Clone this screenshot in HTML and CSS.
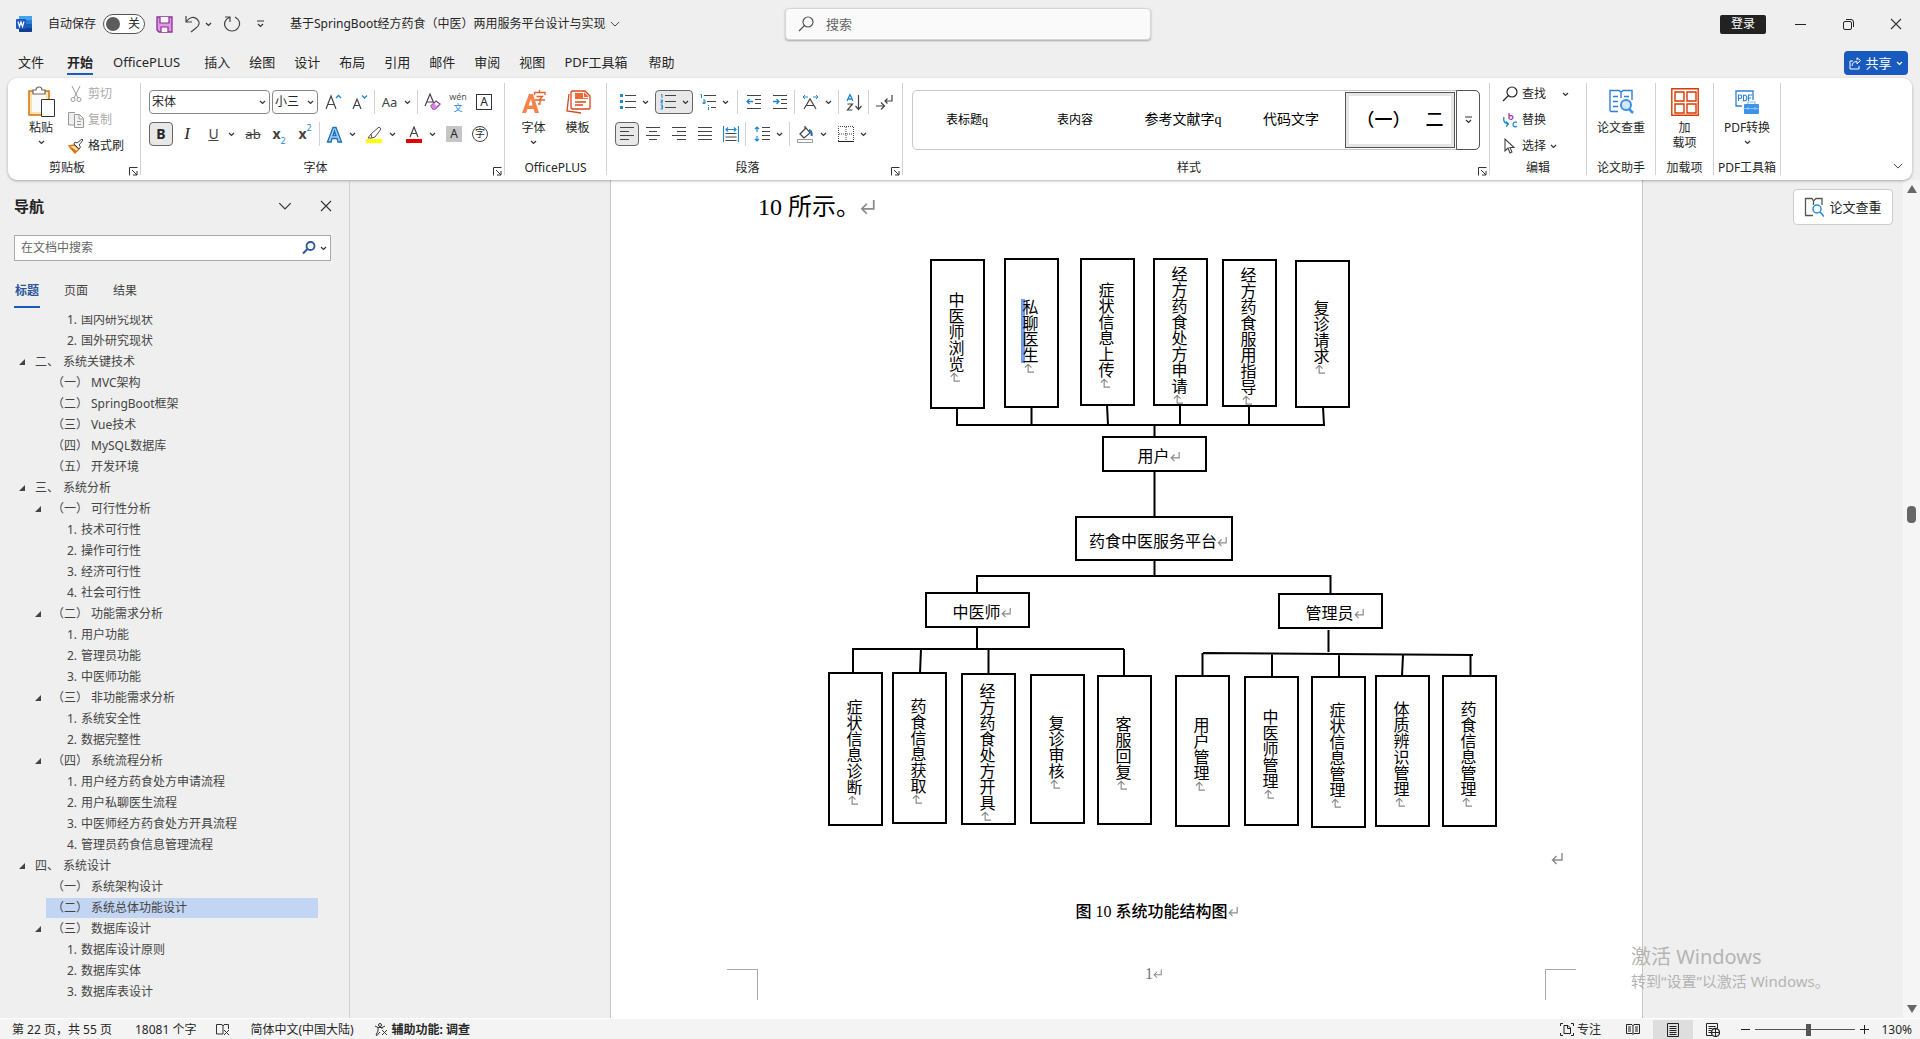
FILE: index.html
```
<!DOCTYPE html>
<html lang="zh-CN">
<head>
  <meta charset="UTF-8">
  <title>基于SpringBoot经方药食（中医）两用服务平台设计与实现</title>
  <link rel="stylesheet" href="styles.css">
</head>
<body>

  <!-- shared symbols -->
  <svg class="symbols" width="0" height="0">
    <symbol id="caret" viewBox="0 0 7 5"><path d="M1 1l2.500 2.500L6 1" fill="none" stroke="#333" stroke-width="1.200"/></symbol>
    <symbol id="chevron" viewBox="0 0 12 7"><path d="M1 1l5 5 5-5" fill="none" stroke="#333" stroke-width="1.100"/></symbol>
    <symbol id="cross" viewBox="0 0 12 12"><path d="M1 1l10 10M11 1L1 11" fill="none" stroke="#333" stroke-width="1.100"/></symbol>
    <symbol id="launcher" viewBox="0 0 9 9"><path d="M.5 8.500v-8h8M3 3l5 5M8 4v4H4" fill="none" stroke="#333"/></symbol>
    <symbol id="mark" viewBox="0 0 12 12"><path d="M11 0v7H2M5.500 3L1.500 7l4 4" fill="none" stroke="#8a8a8a" stroke-width="1.400"/></symbol>
    <symbol id="lens" viewBox="0 0 16 16"><circle cx="10" cy="6" r="5" fill="none" stroke="currentColor" stroke-width="1.200"/><path d="M6.500 9.500L1 15" stroke="currentColor" stroke-width="1.200"/></symbol>
  </svg>

  <div class="app">
    <header class="titlebar">
      <div class="quick">
        <svg class="logo" width="16" height="16" viewBox="0 0 16 16">
          <rect x="3" y="0" width="13" height="16" rx="1" fill="#2b7cd3"/>
          <rect x="3" y="0" width="13" height="4" fill="#41a5ee"/>
          <rect x="3" y="8" width="13" height="4" fill="#185abd"/>
          <path d="M3 12h13v3a1 1 0 0 1-1 1H4a1 1 0 0 1-1-1z" fill="#103f91"/>
          <rect x="0" y="3" width="10" height="10" rx="1" fill="#185abd"/>
          <path d="M2 5.500l1.500 5L5 6l1.500 4.500L8 5.500" fill="none" stroke="#fff" stroke-width="1.200"/>
        </svg>
        <label class="autosave">自动保存
          <input type="checkbox" class="switch-input">
          <span class="switch">关</span>
        </label>
        <button class="plain" aria-label="保存">
          <svg width="17" height="17" viewBox="0 0 17 17"><path d="M1 1h15v15H3l-2-2z" fill="#dd9ae0" stroke="#8a2f96" stroke-width="1.300"/><path d="M4 1v6h9V1M5 16v-5h7v5" fill="#f5f5f5" stroke="#8a2f96" stroke-width="1.200"/></svg>
        </button>
        <button class="plain undo" aria-label="撤消">
          <svg width="17" height="18" viewBox="0 0 17 18"><path d="M2 1v6h6M2 7c3-5 8-6 11-3s3 6-1 9l-5 4" fill="none" stroke="#444" stroke-width="1.200"/></svg>
          <svg width="7" height="5"><use href="#caret"/></svg>
        </button>
        <button class="plain redo" aria-label="重复">
          <svg width="18" height="18" viewBox="0 0 18 18"><path d="M2 2h5v5M6.500 2.500C2 4 0 9 3 13s9 4 12 0 2-8-3-11" fill="none" stroke="#444" stroke-width="1.200"/></svg>
        </button>
        <button class="plain more" aria-label="自定义">
          <svg width="9" height="8" viewBox="0 0 9 8"><path d="M1 1h7M2 4l2.500 2.500L7 4" fill="none" stroke="#333" stroke-width="1.200"/></svg>
        </button>
        <button class="plain doc-name">基于SpringBoot经方药食（中医）两用服务平台设计与实现
          <svg width="10" height="6"><use href="#chevron"/></svg>
        </button>
      </div>
      <label class="search">
        <svg width="16" height="16"><use href="#lens"/></svg>
        <input type="text" placeholder="搜索" aria-label="搜索">
      </label>
      <div class="window">
        <button class="login">登录</button>
        <button class="win-btn" aria-label="最小化"><svg width="11" height="11"><path d="M0 5.500h11" stroke="#222"/></svg></button>
        <button class="win-btn" aria-label="还原"><svg width="11" height="11" viewBox="0 0 11 11"><rect x=".5" y="2.500" width="8" height="8" rx="1.500" fill="none" stroke="#222"/><path d="M3 .5h5a2.500 2.500 0 0 1 2.500 2.500v5" fill="none" stroke="#222"/></svg></button>
        <button class="win-btn" aria-label="关闭"><svg width="12" height="12"><use href="#cross"/></svg></button>
      </div>
    </header>

    <nav class="tabs">
      <a href="#" class="tab">文件</a>
      <a href="#" class="tab active">开始</a>
      <a href="#" class="tab brand">OfficePLUS</a>
      <a href="#" class="tab">插入</a>
      <a href="#" class="tab">绘图</a>
      <a href="#" class="tab">设计</a>
      <a href="#" class="tab">布局</a>
      <a href="#" class="tab">引用</a>
      <a href="#" class="tab">邮件</a>
      <a href="#" class="tab">审阅</a>
      <a href="#" class="tab">视图</a>
      <a href="#" class="tab">PDF工具箱</a>
      <a href="#" class="tab">帮助</a>
      <button class="share">
        <svg width="12" height="13" viewBox="0 0 12 13"><path d="M4 4H1v8h9V9M3 9c0-3 2-4.500 5-4.500V7l3.500-3.500L8 .8v2.400" fill="none" stroke="#fff"/></svg>
        共享
        <svg width="7" height="5" viewBox="0 0 7 5"><path d="M1 1l2.500 2.500L6 1" fill="none" stroke="#fff" stroke-width="1.200"/></svg>
      </button>
    </nav>

    <section class="ribbon">
      <div class="group clipboard">
        <div class="group-body">
          <button class="big">
            <svg width="28" height="32" viewBox="0 0 28 32"><path d="M2 5h20v24H2z" fill="#fde3a7" stroke="#d9720f" stroke-width="1.500"/><path d="M5 8h14v18H5z" fill="#fafafa"/><path d="M6 8V4h3c0-4 6-4 6 0h3v4z" fill="#fff" stroke="#666" stroke-width="1.200"/><path d="M14.500 13.500h13v17h-13z" fill="#fff" stroke="#333"/></svg>
            <span>粘贴</span>
            <svg width="7" height="5"><use href="#caret"/></svg>
          </button>
          <div class="list">
            <button class="line-btn" disabled>
              <svg width="16" height="16" viewBox="0 0 16 16"><path d="M4 0l6 12M12 0L6 12" fill="none" stroke="#999"/><circle cx="5" cy="13.500" r="2" fill="none" stroke="#999"/><circle cx="11" cy="13.500" r="2" fill="none" stroke="#999"/></svg>剪切
            </button>
            <button class="line-btn" disabled>
              <svg width="16" height="16" viewBox="0 0 16 16"><path d="M7 13H.5V.5H7" fill="#eee" stroke="#999"/><path d="M6.500 2.500h5l4 4v9h-9zM11 3v4h4M9 9.500h4M9 12.500h4" fill="#f3f3f3" stroke="#999"/></svg>复制
            </button>
            <button class="line-btn">
              <svg width="16" height="16" viewBox="0 0 16 16"><path d="M1 8l5-1 5 4-4 4z" fill="#fde3a7" stroke="#d9720f" stroke-width="1.300"/><path d="M3 10l5 4" stroke="#d9720f" stroke-width="2"/><path d="M6 6l5 5 1.500-2L11 7l4-5-1-1-5 4-2-1z" fill="#fff" stroke="#444"/></svg>格式刷
            </button>
          </div>
        </div>
        <div class="group-foot launch"><span>剪贴板</span><button class="plain" aria-label="剪贴板选项"><svg width="9" height="9"><use href="#launcher"/></svg></button></div>
      </div>

      <div class="group font">
        <div class="group-rows">
          <div class="row">
            <select class="combo family" aria-label="字体"><option>宋体</option></select>
            <select class="combo size" aria-label="字号"><option>小三</option></select>
            <button class="tool" aria-label="增大字号"><svg width="18" height="16" viewBox="0 0 18 16"><path d="M1 15L6 2l5 13M3 10.500h6" fill="none" stroke="#444" stroke-width="1.200"/><path d="M11 4l2.500-2.500L16 4" fill="none" stroke="#1e88d0" stroke-width="1.300"/></svg></button>
            <button class="tool" aria-label="减小字号"><svg width="18" height="16" viewBox="0 0 18 16"><path d="M2 15l4-10 4 10M3.500 11.500h5" fill="none" stroke="#444" stroke-width="1.200"/><path d="M11 1.500L13.500 4 16 1.500" fill="none" stroke="#1e88d0" stroke-width="1.300"/></svg></button>
            <i class="sep"></i>
            <button class="tool split"><span class="glyph">Aa</span><svg width="7" height="5"><use href="#caret"/></svg></button>
            <i class="sep"></i>
            <button class="tool" aria-label="清除格式"><svg width="18" height="18" viewBox="0 0 18 18"><path d="M2 13L7 1l5 12M4 9h6" fill="none" stroke="#444" stroke-width="1.200"/><path d="M8 13l5-5 4 3-5 5h-2z" fill="#fff" stroke="#9b34a8" stroke-width="1.300"/><path d="M8 13l3-3 3 4-2 2h-2z" fill="#d08bd8"/></svg></button>
            <button class="tool pinyin"><span>wén</span><b>文</b></button>
            <button class="tool"><span class="boxed">A</span></button>
          </div>
          <div class="row">
            <button class="tool on"><b class="bold">B</b></button>
            <button class="tool"><i class="italic">I</i></button>
            <button class="tool split"><u class="glyph line">U</u><svg width="7" height="5"><use href="#caret"/></svg></button>
            <button class="tool"><s class="strike">ab</s></button>
            <button class="tool script"><b>x</b><sub>2</sub></button>
            <button class="tool script"><b>x</b><sup>2</sup></button>
            <i class="sep"></i>
            <button class="tool split"><svg width="17" height="17" viewBox="0 0 17 17"><path d="M1.500 16L7 1.500h3L15.500 16H12l-1-3.500H6L5 16zM7 9.500h3L8.500 5z" fill="#9fd0f3" stroke="#1f6fb8" stroke-width="1.300"/></svg><svg width="7" height="5"><use href="#caret"/></svg></button>
            <button class="tool split"><svg width="17" height="17" viewBox="0 0 17 17"><path d="M5 8l8-7 2 2-6 8-3 1zM5 8l-3 4h4" fill="#fff" stroke="#555"/><path d="M0 13h16v4H0z" fill="#ff0"/></svg><svg width="7" height="5"><use href="#caret"/></svg></button>
            <button class="tool split"><svg width="17" height="17" viewBox="0 0 17 17"><path d="M4 11L8 1l4 10M5.500 7.500h5" fill="none" stroke="#444" stroke-width="1.200"/><path d="M0 13h16v4H0z" fill="#e60000"/></svg><svg width="7" height="5"><use href="#caret"/></svg></button>
            <button class="tool"><span class="shaded">A</span></button>
            <button class="tool"><span class="ring">字</span></button>
          </div>
        </div>
        <div class="group-foot launch"><span>字体</span><button class="plain" aria-label="字体选项"><svg width="9" height="9"><use href="#launcher"/></svg></button></div>
      </div>

      <div class="group office">
        <div class="group-body">
          <button class="big">
            <svg width="26" height="26" viewBox="0 0 26 26"><path d="M1 24L8 5h4l6 19h-4l-1.500-4H6.500L5 24zM7.500 16.500h4L10 10z" fill="#f5824a"/><path d="M13.500 6V3.500H24V6M18.500 1v2M15.500 7.500h6L19 10v5h-2M14 11h10" fill="none" stroke="#e4602a" stroke-width="1.300"/></svg>
            <span>字体</span>
            <svg width="7" height="5"><use href="#caret"/></svg>
          </button>
          <button class="big">
            <svg width="26" height="26" viewBox="0 0 26 26"><path d="M7 2h13l5 5v12a1 1 0 0 1-1 1H8a2 2 0 0 1-2-2V3zM4 5L2 22l14 2" fill="none" stroke="#d9481c" stroke-width="1.300"/><path d="M10 4h8v5h5v1H10zM19 3v5h5z" fill="#ee6a35"/><path d="M10 13h11M10 16h8" stroke="#d9481c" stroke-width="1.300"/></svg>
            <span>模板</span>
          </button>
        </div>
        <div class="group-foot"><span>OfficePLUS</span></div>
      </div>

      <div class="group paragraph">
        <div class="group-rows">
          <div class="row">
            <button class="tool split" aria-label="项目符号"><svg width="16" height="16" viewBox="0 0 16 16"><path d="M0 0h3v3H0zM0 6h3v3H0zM0 12h3v3H0z" fill="#1e88d0"/><path d="M5 1.500h11M5 7.500h11M5 13.500h11" stroke="#444"/></svg><svg width="7" height="5"><use href="#caret"/></svg></button>
            <button class="tool split on" aria-label="编号"><svg width="16" height="16" viewBox="0 0 16 16"><path d="M1 .5h1V4M.5 6h2v1.500H1V9h2M.5 11h2v4h-2M1 13h1.500" fill="none" stroke="#1e88d0"/><path d="M5 1.500h11M5 7.500h11M5 13.500h11" stroke="#444"/></svg><svg width="7" height="5"><use href="#caret"/></svg></button>
            <button class="tool split" aria-label="多级列表"><svg width="16" height="16" viewBox="0 0 16 16"><path d="M.5.500h1V4M3 6h2v3.500H3V8h2M8.500 11v1M8.500 13v3" fill="none" stroke="#1e88d0"/><path d="M4 1.500h12M7 7.500h9M11 13.500h5" stroke="#444"/></svg><svg width="7" height="5"><use href="#caret"/></svg></button>
            <i class="sep wide"></i>
            <button class="tool" aria-label="减少缩进"><svg width="16" height="16" viewBox="0 0 16 16"><path d="M1 1.500h14M9 5.500h6M9 9.500h6M1 14.500h14" stroke="#444"/><path d="M7 7.500H1M3.500 5L1 7.500 3.500 10" fill="none" stroke="#1e88d0" stroke-width="1.300"/></svg></button>
            <button class="tool" aria-label="增加缩进"><svg width="16" height="16" viewBox="0 0 16 16"><path d="M1 1.500h14M9 5.500h6M9 9.500h6M1 14.500h14" stroke="#444"/><path d="M1 7.500h6M4.500 5L7 7.500 4.500 10" fill="none" stroke="#1e88d0" stroke-width="1.300"/></svg></button>
            <i class="sep"></i>
            <button class="tool split" aria-label="中文版式"><svg width="17" height="16" viewBox="0 0 17 16"><path d="M2 15L8 5l6 10M4 11.500h8" fill="none" stroke="#444" stroke-width="1.200"/><path d="M6 3H1M3 1L1 3l2 2M11 3h5M14 1l2 2-2 2" fill="none" stroke="#1e88d0"/></svg><svg width="7" height="5"><use href="#caret"/></svg></button>
            <i class="sep"></i>
            <button class="tool" aria-label="排序"><svg width="17" height="17" viewBox="0 0 17 17"><path d="M1 7l3-6.500L7 7M2 5h4" fill="none" stroke="#1e88d0" stroke-width="1.300"/><path d="M1.500 10h5l-5 6h5M12.500 1v14M9.500 12l3 3.500 3-3.500" fill="none" stroke="#444" stroke-width="1.200"/></svg></button>
            <i class="sep"></i>
            <button class="tool" aria-label="显示编辑标记"><svg width="17" height="17" viewBox="0 0 17 17"><path d="M16 1v6H9M11.500 4.500L9 7l2.500 2.500M0 12h8M5 8.500L8.500 12 5 15.500" fill="none" stroke="#444" stroke-width="1.200"/></svg></button>
          </div>
          <div class="row">
            <button class="tool on" aria-label="左对齐"><svg width="16" height="16"><path d="M1 1.500h14M1 5.500h9M1 9.500h14M1 13.500h9" stroke="#444"/></svg></button>
            <button class="tool" aria-label="居中"><svg width="16" height="16"><path d="M1 1.500h14M4 5.500h8M1 9.500h14M4 13.500h8" stroke="#444"/></svg></button>
            <button class="tool" aria-label="右对齐"><svg width="16" height="16"><path d="M1 1.500h14M6 5.500h9M1 9.500h14M6 13.500h9" stroke="#444"/></svg></button>
            <button class="tool" aria-label="两端对齐"><svg width="16" height="16"><path d="M1 1.500h14M1 5.500h14M1 9.500h14M1 13.500h14" stroke="#444"/></svg></button>
            <button class="tool" aria-label="分散对齐"><svg width="16" height="16" viewBox="0 0 16 16"><path d="M.5 0v16M15.500 0v16M3 3.500h10M5 1.500l-2 2 2 2M11 1.500l2 2-2 2" fill="none" stroke="#1e88d0" stroke-width="1.200"/><path d="M2.500 7.500h11M2.500 11h11M2.500 14.500h11" stroke="#444"/></svg></button>
            <i class="sep"></i>
            <button class="tool split" aria-label="行距"><svg width="16" height="16" viewBox="0 0 16 16"><path d="M3 1v5M3 10v5M1 3l2-2 2 2M1 13l2 2 2-2" fill="none" stroke="#1e88d0" stroke-width="1.200"/><path d="M8 1.500h8M8 5.500h8M8 9.500h8M8 13.500h8" stroke="#444"/></svg><svg width="7" height="5"><use href="#caret"/></svg></button>
            <i class="sep"></i>
            <button class="tool split" aria-label="底纹"><svg width="17" height="17" viewBox="0 0 17 17"><path d="M3 8l6-6 4 5-6 5zM8 3V0" fill="#fff" stroke="#444" stroke-width="1.200"/><path d="M12 4c3 1 3 3 2.500 6" fill="none" stroke="#1f6fb8" stroke-width="2"/><path d="M.5 13.500h15v3H.5z" fill="#fff" stroke="#999"/></svg><svg width="7" height="5"><use href="#caret"/></svg></button>
            <button class="tool split" aria-label="边框"><svg width="16" height="16" viewBox="0 0 16 16"><path d="M.5 15V.5h15V15M8 1v14M1 8h14" fill="none" stroke="#444" stroke-dasharray="1 1"/><path d="M0 15.500h16" stroke="#222"/></svg><svg width="7" height="5"><use href="#caret"/></svg></button>
          </div>
        </div>
        <div class="group-foot launch"><span>段落</span><button class="plain" aria-label="段落选项"><svg width="9" height="9"><use href="#launcher"/></svg></button></div>
      </div>

      <div class="group styles">
        <div class="group-rows">
          <div class="gallery">
            <button class="style small">表标题q</button>
            <button class="style small">表内容</button>
            <button class="style">参考文献字q</button>
            <button class="style">代码文字</button>
            <button class="style selected"><span>（一）</span><span>二</span></button>
            <button class="expand" aria-label="其他样式"><svg width="9" height="8" viewBox="0 0 9 8"><path d="M1 1h7M2 4l2.500 2.500L7 4" fill="none" stroke="#333" stroke-width="1.200"/></svg></button>
          </div>
        </div>
        <div class="group-foot launch"><span>样式</span><button class="plain" aria-label="样式选项"><svg width="9" height="9"><use href="#launcher"/></svg></button></div>
      </div>

      <div class="group edit">
        <div class="group-body">
          <div class="list">
            <button class="line-btn find"><svg width="16" height="16"><use href="#lens"/></svg>查找<svg width="7" height="5"><use href="#caret"/></svg></button>
            <button class="line-btn"><svg width="16" height="16" viewBox="0 0 16 16"><path d="M7 1v6M7 4.500c1-1.500 4-1 4 1s-3 2.500-4 1" fill="none" stroke="#9b34a8" stroke-width="1.200"/><path d="M2 5c-1 4 0 6 4 7M4 9.500L6.500 12 4 14.500M15 10.500c-2-1.500-4 0-4 2s2 3 4 1.500" fill="none" stroke="#1e88d0" stroke-width="1.300"/></svg>替换</button>
            <button class="line-btn"><svg width="16" height="16" viewBox="0 0 16 16"><path d="M3 1v12l3-3 2 5 2-1-2-4.500h4z" fill="#fff" stroke="#444" stroke-width="1.100"/></svg>选择<svg width="7" height="5"><use href="#caret"/></svg></button>
          </div>
        </div>
        <div class="group-foot"><span>编辑</span></div>
      </div>

      <div class="group paper-tool">
        <div class="group-body">
          <button class="big">
            <svg width="26" height="26" viewBox="0 0 26 26"><path d="M24 11V1.500h-9L13 3l-2-1.500H2v20l1 1h7M13 3v6M5 7.500h5M5 12.500h5M5 17.500h5M16 7.500h5" fill="none" stroke="#2f7fd6" stroke-width="1.400"/><circle cx="18" cy="16" r="5" fill="#d4e8fb" stroke="#3a8fe6" stroke-width="2"/><path d="M21 20l4 4" stroke="#3a8fe6" stroke-width="2.500"/></svg>
            <span>论文查重</span>
          </button>
        </div>
        <div class="group-foot"><span>论文助手</span></div>
      </div>

      <div class="group addins">
        <div class="group-body">
          <button class="big">
            <svg width="28" height="28" viewBox="0 0 28 28"><path d="M.8.800h26.400v26.400H.8zM4 4h9v9H4zM16 4h9v9h-9zM4 16h9v9H4zM16 16h9v9h-9z" fill="none" stroke="#d83b01" stroke-width="1.400"/></svg>
            <span>加<br>载项</span>
          </button>
        </div>
        <div class="group-foot"><span>加载项</span></div>
      </div>

      <div class="group pdf">
        <div class="group-body">
          <button class="big">
            <svg width="26" height="26" viewBox="0 0 26 26"><path d="M8 17H2V2h17v9" fill="none" stroke="#2f7fd6" stroke-width="1.300"/><path d="M4.500 12V6h1.500a1.500 1.500 0 0 1 0 3.500H4.500M9.500 6v6c4.500 0 4.500-6 0-6M14.500 12V6H18M14.500 9H17" fill="none" stroke="#2f7fd6" stroke-width="1.100"/><rect x="10" y="15" width="15" height="10" rx="1" fill="#3f92ea"/><path d="M14 15v-2h7v2M10 19.500h15M14 18v3M21 18v3" fill="none" stroke="#8cc3f8" stroke-width="1.200"/></svg>
            <span>PDF转换</span>
            <svg width="7" height="5"><use href="#caret"/></svg>
          </button>
        </div>
        <div class="group-foot"><span>PDF工具箱</span></div>
      </div>

      <button class="plain collapse" aria-label="折叠功能区"><svg width="10" height="6"><use href="#chevron"/></svg></button>
    </section>

    <main class="workspace">
      <aside class="outline">
        <div class="outline-head">
          <h2>导航</h2>
          <button class="plain" aria-label="选项"><svg width="14" height="8"><use href="#chevron"/></svg></button>
          <button class="plain" aria-label="关闭"><svg width="12" height="12"><use href="#cross"/></svg></button>
        </div>
        <label class="outline-search">
          <input type="text" placeholder="在文档中搜索" aria-label="在文档中搜索">
          <svg width="14" height="14" viewBox="0 0 14 14"><circle cx="8.500" cy="5" r="4" fill="none" stroke="#2b579a" stroke-width="1.800"/><path d="M5.500 8L1 12.500" stroke="#2b579a" stroke-width="2"/></svg>
          <svg width="7" height="5"><use href="#caret"/></svg>
        </label>
        <div class="outline-tabs">
          <button class="active">标题</button>
          <button>页面</button>
          <button>结果</button>
        </div>
        <div class="outline-scroll">
          <ul class="tree">
            <li class="l3"><span>1.</span>国内研究现状</li>
            <li class="l3"><span>2.</span>国外研究现状</li>
            <li class="l1 open"><span>二、</span>系统关键技术</li>
            <li class="l2"><span>（一）</span>MVC架构</li>
            <li class="l2"><span>（二）</span>SpringBoot框架</li>
            <li class="l2"><span>（三）</span>Vue技术</li>
            <li class="l2"><span>（四）</span>MySQL数据库</li>
            <li class="l2"><span>（五）</span>开发环境</li>
            <li class="l1 open"><span>三、</span>系统分析</li>
            <li class="l2 open"><span>（一）</span>可行性分析</li>
            <li class="l3"><span>1.</span>技术可行性</li>
            <li class="l3"><span>2.</span>操作可行性</li>
            <li class="l3"><span>3.</span>经济可行性</li>
            <li class="l3"><span>4.</span>社会可行性</li>
            <li class="l2 open"><span>（二）</span>功能需求分析</li>
            <li class="l3"><span>1.</span>用户功能</li>
            <li class="l3"><span>2.</span>管理员功能</li>
            <li class="l3"><span>3.</span>中医师功能</li>
            <li class="l2 open"><span>（三）</span>非功能需求分析</li>
            <li class="l3"><span>1.</span>系统安全性</li>
            <li class="l3"><span>2.</span>数据完整性</li>
            <li class="l2 open"><span>（四）</span>系统流程分析</li>
            <li class="l3"><span>1.</span>用户经方药食处方申请流程</li>
            <li class="l3"><span>2.</span>用户私聊医生流程</li>
            <li class="l3"><span>3.</span>中医师经方药食处方开具流程</li>
            <li class="l3"><span>4.</span>管理员药食信息管理流程</li>
            <li class="l1 open"><span>四、</span>系统设计</li>
            <li class="l2"><span>（一）</span>系统架构设计</li>
            <li class="l2 current"><span>（二）</span>系统总体功能设计</li>
            <li class="l2 open"><span>（三）</span>数据库设计</li>
            <li class="l3"><span>1.</span>数据库设计原则</li>
            <li class="l3"><span>2.</span>数据库实体</li>
            <li class="l3"><span>3.</span>数据库表设计</li>
          </ul>
        </div>
      </aside>

      <div class="canvas">
        <article class="page">
          <p class="lead">10 所示。<svg width="15" height="15"><use href="#mark"/></svg></p>

          <div class="figure">
            <div class="diagram">
              <svg class="wires" viewBox="758 240 793 625">
                <path d="M957 407v18M1031.500 407v18M1107 405l1 20M1180 405v20M1249 406v19M1323 407l1 18M956 425h369M1154.500 425v12M1154.500 471v46M1154.500 560v16M976 576h355.500M977 576v17M1330.500 576v18M977 627v22M852 649h272M853 649v24M921 649l-1 24M988.500 649v25M1124 649v27M1328.500 630v22M1203 653l270 2M1202.500 653v23M1272 654v23M1339 654v23M1403 655l-1 21M1470.500 655v21"/>
              </svg>
              <div class="node tall browse"><span>中医师浏览</span><svg><use href="#mark"/></svg></div>
              <div class="node tall chat"><span class="picked">私聊医生</span><svg><use href="#mark"/></svg></div>
              <div class="node tall upload"><span>症状信息上传</span><svg><use href="#mark"/></svg></div>
              <div class="node tall apply"><span>经方药食处方申请</span><svg><use href="#mark"/></svg></div>
              <div class="node tall guide"><span>经方药食服用指导</span><svg><use href="#mark"/></svg></div>
              <div class="node tall revisit"><span>复诊请求</span><svg><use href="#mark"/></svg></div>

              <div class="node user"><span>用户</span><svg><use href="#mark"/></svg></div>
              <div class="node platform"><span>药食中医服务平台</span><svg><use href="#mark"/></svg></div>
              <div class="node doctor"><span>中医师</span><svg><use href="#mark"/></svg></div>
              <div class="node admin"><span>管理员</span><svg><use href="#mark"/></svg></div>

              <div class="node tall diagnose"><span>症状信息诊断</span><svg><use href="#mark"/></svg></div>
              <div class="node tall fetch"><span>药食信息获取</span><svg><use href="#mark"/></svg></div>
              <div class="node tall prescribe"><span>经方药食处方开具</span><svg><use href="#mark"/></svg></div>
              <div class="node tall review"><span>复诊审核</span><svg><use href="#mark"/></svg></div>
              <div class="node tall reply"><span>客服回复</span><svg><use href="#mark"/></svg></div>

              <div class="node tall manage-user"><span>用户管理</span><svg><use href="#mark"/></svg></div>
              <div class="node tall manage-doctor"><span>中医师管理</span><svg><use href="#mark"/></svg></div>
              <div class="node tall manage-symptom"><span>症状信息管理</span><svg><use href="#mark"/></svg></div>
              <div class="node tall manage-body"><span>体质辨识管理</span><svg><use href="#mark"/></svg></div>
              <div class="node tall manage-food"><span>药食信息管理</span><svg><use href="#mark"/></svg></div>
            </div>
            <svg class="figure-mark" width="12" height="12"><use href="#mark"/></svg>
          </div>

          <p class="caption">图 10 系统功能结构图<svg width="10" height="10"><use href="#mark"/></svg></p>

          <div class="page-foot">
            <i class="corner left"></i>
            <span class="page-no">1<svg width="9" height="10"><use href="#mark"/></svg></span>
            <i class="corner right"></i>
          </div>
        </article>

        <button class="check">
          <svg width="20" height="20" viewBox="0 0 20 20"><path d="M18 8V1.500h-6L9.500 4 8 1.500H1.500v17H9M9.500 3v5" fill="none" stroke="#555" stroke-width="1.300"/><circle cx="13" cy="12" r="4" fill="none" stroke="#2a8fd8" stroke-width="1.500"/><path d="M16 15l4 4.500" stroke="#2a8fd8" stroke-width="1.600"/></svg>
          论文查重
        </button>
        <div class="watermark">
          <p class="wm-title">激活 Windows</p>
          <p>转到“设置”以激活 Windows。</p>
        </div>
      </div>

      <div class="scrollbar">
        <svg width="10" height="8"><path d="M5 0l5 8H0z" fill="#666"/></svg>
        <i class="thumb"></i>
        <svg width="10" height="8"><path d="M5 8l5-8H0z" fill="#666"/></svg>
      </div>
    </main>

    <footer class="status">
      <span class="pages">第 22 页，共 55 页</span>
      <span>18081 个字</span>
      <svg width="14" height="13" viewBox="0 0 14 13"><path d="M7 11H.5V1.500H6L7 3l1-1.500h4.500V6M7 3v8M8 7l5 5M13 7l-5 5" fill="none" stroke="#333"/></svg>
      <span>简体中文(中国大陆)</span>
      <span class="access">
        <svg width="14" height="13" viewBox="0 0 14 13"><circle cx="6" cy="2" r="1.500" fill="none" stroke="#333"/><path d="M1 3l3 1.500h4L11 3M4 4.500V8l-2 4 1 .5L6 9M8 4.500V6M8 7l5 5M13 7l-5 5" fill="none" stroke="#333"/></svg>
        辅助功能: 调查
      </span>
      <div class="views">
        <button class="plain focus"><svg width="14" height="13" viewBox="0 0 14 13"><path d="M3 .5H.5V3M11 .5h2.500V3M3 12.500H.5V10M11 12.500h2.500V10M4 2.500h4l2.500 2.500v5.500H4zM7.500 3v2.500H10" fill="none" stroke="#222"/></svg>专注</button>
        <button class="view" aria-label="阅读视图"><svg width="14" height="13" viewBox="0 0 14 13"><path d="M.5 1.500H6l1 1 1-1h5.500v9H8l-1 1-1-1H.5zM7 2v9M2 4h3M2 6h3M2 8h3M9 4h3M9 6h3M9 8h3" fill="none" stroke="#222"/></svg></button>
        <button class="view on" aria-label="页面视图"><svg width="12" height="14" viewBox="0 0 12 14"><path d="M.5.500h11v13H.5zM2.500 3.500h7M2.500 5.500h7M2.500 7.500h7M2.500 9.500h7M2.500 11.500h7" fill="none" stroke="#222"/></svg></button>
        <button class="view" aria-label="Web 版式"><svg width="14" height="14" viewBox="0 0 14 14"><path d="M6 12.500H.5V.5h11V5M2.500 3.500h7M2.500 5.500h4M2.500 7.500h3M2.500 9.500h3" fill="none" stroke="#222"/><circle cx="9.500" cy="9.500" r="4" fill="#f4f4f4" stroke="#222" stroke-width="1.300"/><path d="M5.500 9.500h8M9.500 5.500v8" stroke="#222"/></svg></button>
      </div>
      <div class="zoom">
        <button class="plain" aria-label="缩小"><svg width="9" height="9"><path d="M0 4.500h9" stroke="#222"/></svg></button>
        <input type="range" min="0" max="100" value="54" aria-label="缩放">
        <button class="plain" aria-label="放大"><svg width="9" height="9"><path d="M0 4.500h9M4.500 0v9" stroke="#222"/></svg></button>
        <span class="percent">130%</span>
      </div>
    </footer>
  </div>

</body>
</html>
```
FILE: styles.css
```
* {
  box-sizing: border-box;
}

body {
  margin: 0;
  height: 100vh;
  overflow: hidden;
  background: #efefef;
  color: #262626;
  font-family: "Noto Sans", "Noto Sans CJK SC", sans-serif;
  font-size: 12px;
  line-height: 16px;
}

p, h2, ul {
  margin: 0;
  padding: 0;
}

button, input, select {
  font: inherit;
  color: inherit;
}

button {
  border: none;
  background: none;
  padding: 0;
  white-space: nowrap;
}

svg {
  flex: none;
  display: block;
}

.symbols {
  position: absolute;
}

.plain {
  display: flex;
  align-items: center;
}

.app {
  height: 100vh;
  display: grid;
  grid-template-rows: 48px 30px auto 1fr 21px;
}

/* title bar */
.titlebar {
  display: grid;
  grid-template-columns: 1fr 366px 1fr;
  align-items: center;
  padding-left: 16px;
}

.quick {
  display: flex;
  align-items: center;
  gap: 11px;
}

.autosave {
  display: flex;
  align-items: center;
  gap: 7px;
  margin-left: 5px;
}

.switch-input {
  position: absolute;
  opacity: 0;
}

.switch {
  display: flex;
  align-items: center;
  justify-content: flex-end;
  gap: 8px;
  flex-direction: row-reverse;
  width: 42px;
  height: 20px;
  padding: 0 2px;
  border: 1px solid #555;
  border-radius: 10px;
  background: #fff;
}

.switch::after {
  content: "";
  width: 14px;
  height: 14px;
  border-radius: 50%;
  background: #5c5c5c;
}

.undo {
  gap: 4px;
}

.redo {
  margin-right: 4px;
}

.more {
  margin-right: 14px;
}

.doc-name {
  gap: 4px;
}

.search {
  display: flex;
  align-items: center;
  gap: 12px;
  height: 32px;
  padding: 0 12px;
  border: 1px solid #d6d6d6;
  border-radius: 4px;
  background: #fafafa;
  box-shadow: 0 1px 2px rgba(0, 0, 0, 0.3);
  color: #555;
}

.search input {
  flex: 1;
  border: none;
  background: none;
  padding: 0;
  font-size: 13px;
}

input::placeholder {
  color: #666;
  opacity: 1;
}

.window {
  display: flex;
  justify-content: flex-end;
  align-items: center;
}

.login {
  width: 46px;
  height: 19px;
  margin-right: 10px;
  border-radius: 2px;
  background: #222;
  color: #fff;
}

.win-btn {
  width: 48px;
  height: 48px;
  display: flex;
  align-items: center;
  justify-content: center;
}

/* ribbon tabs */
.tabs {
  display: flex;
  align-items: center;
  gap: 19px;
  padding: 0 12px 0 18px;
  font-size: 13px;
}

.tab {
  height: 24px;
  padding-top: 3px;
  color: #262626;
  text-decoration: none;
  border-bottom: 2px solid transparent;
  white-space: nowrap;
}

.tab.active {
  margin-left: 4px;
  font-weight: bold;
  border-color: #185abd;
}

.tab.brand {
  margin: 0 5px 0 1px;
}

.tab:last-of-type {
  margin-left: 2px;
}

.share {
  display: flex;
  align-items: center;
  justify-content: center;
  gap: 4px;
  width: 64px;
  height: 24px;
  margin-left: auto;
  border-radius: 4px;
  background: #185abd;
  color: #fff;
}

/* ribbon */
.ribbon {
  display: flex;
  margin: 0 8px;
  padding: 5px 0;
  border-radius: 9px;
  background: #fff;
  box-shadow: 0 1px 3px rgba(0, 0, 0, 0.3);
  position: relative;
  z-index: 1;
}

.group {
  display: flex;
  flex-direction: column;
  flex: none;
  height: 92px;
  border-right: 1px solid #d2d2d2;
}

.clipboard { width: 133px; }
.font { width: 364px; }
.office { width: 102px; }
.paragraph { width: 296px; }
.edit { width: 97px; }
.paper-tool { width: 69px; }
.addins { width: 58px; }
.pdf { width: 67px; }

.styles {
  flex: 1;
  min-width: 0;
}

.group-body {
  flex: 1;
  display: flex;
  justify-content: center;
}

.clipboard .group-body {
  justify-content: flex-start;
  gap: 5px;
  padding-left: 11px;
}

.group-rows {
  flex: 1;
  display: flex;
  flex-direction: column;
  gap: 8px;
  padding: 7px 0 0 8px;
}

.group-foot {
  display: flex;
  justify-content: center;
  height: 15px;
  line-height: 16px;
  white-space: nowrap;
}

.group-foot.launch {
  display: grid;
  grid-template-columns: 1fr 14px;
  justify-items: center;
}

.group-foot .plain {
  align-items: flex-end;
}

.big {
  display: flex;
  flex-direction: column;
  align-items: center;
  width: 44px;
  padding-top: 3px;
  line-height: 15px;
}

.big svg:first-child {
  height: 32px;
}

.big span {
  margin: 2px 0 5px;
}

.list {
  display: flex;
  flex-direction: column;
  gap: 4px;
}

.line-btn {
  display: flex;
  align-items: center;
  gap: 4px;
  height: 22px;
}

.line-btn:disabled {
  color: #aaa;
}

.line-btn.find svg:last-child {
  margin-left: 12px;
}

.edit .list {
  width: 72px;
}

.row {
  display: flex;
  align-items: center;
  gap: 2px;
}

.combo {
  flex: none;
  height: 24px;
  padding: 0 2px;
  border: 1px solid #888;
  border-radius: 4px;
  appearance: none;
  background: #fff url("data:image/svg+xml,%3Csvg xmlns='http://www.w3.org/2000/svg' width='7' height='5'%3E%3Cpath d='M1 1l2.500 2.500L6 1' fill='none' stroke='%23333' stroke-width='1.200'/%3E%3C/svg%3E") no-repeat right 3px center;
}

.family { width: 121px; }

.size {
  width: 46px;
  margin-right: 2px;
}

.tool {
  display: flex;
  align-items: center;
  justify-content: center;
  flex: none;
  width: 24px;
  height: 24px;
  border: 1px solid transparent;
  border-radius: 4px;
}

.tool.split {
  width: 38px;
  gap: 6px;
}

.tool.on {
  border-color: #666;
  background: #e8e8e8;
}

.sep {
  flex: none;
  width: 1px;
  height: 24px;
  background: #d2d2d2;
}

.paragraph .sep {
  margin-right: 1px;
}

.paragraph .sep.wide {
  margin: 0 2px;
}

.glyph {
  width: 17px;
  color: #444;
  font-size: 13px;
}

.glyph.line { font-size: 14px; }

.bold { font-size: 14px; }

.italic {
  font-family: "Liberation Serif", serif;
  font-size: 17px;
}

.strike {
  color: #444;
  font-size: 13px;
}

.script {
  font-size: 14px;
  color: #444;
}

.script sub,
.script sup {
  font-size: 9px;
  line-height: 9px;
  color: #1e88d0;
}

.script sub { align-self: flex-end; }
.script sup { align-self: flex-start; }

.pinyin {
  flex-direction: column;
  font-size: 9px;
  line-height: 11px;
  color: #555;
}

.pinyin b {
  font-weight: normal;
  color: #1e88d0;
}

.boxed,
.shaded,
.ring {
  width: 16px;
  height: 16px;
  line-height: 15px;
}

.boxed {
  border: 1px solid #333;
  line-height: 14px;
}

.shaded { background: #c6c6c6; }

.ring {
  border: 1px solid #444;
  border-radius: 50%;
  font-size: 10px;
  line-height: 13px;
}

.gallery {
  display: flex;
  height: 60px;
  margin: 0 9px 0 1px;
  border: 1px solid #c8c8c8;
  border-radius: 5px;
}

.style {
  flex: 1;
  overflow: hidden;
  font-family: "Liberation Serif", "Noto Sans CJK SC", serif;
  font-size: 14px;
  color: #000;
}

.style.small { font-size: 12px; }

.style.selected {
  display: flex;
  align-items: center;
  justify-content: center;
  gap: 15px;
  margin: 1px 0;
  border: 1px solid #555;
  box-shadow: inset 0 0 0 3px #e6e6e6;
  font-size: 18px;
  font-weight: 500;
}

.expand {
  display: flex;
  align-items: center;
  justify-content: center;
  width: 24px;
  margin: -1px -1px -1px 1px;
  border: 1px solid #555;
  border-radius: 0 5px 5px 0;
}

.collapse {
  align-self: flex-end;
  width: 131px;
  height: 18px;
  justify-content: flex-end;
  padding-right: 9px;
}

/* navigation pane */
.workspace {
  display: flex;
  min-height: 0;
}

.outline {
  width: 350px;
  flex: none;
  display: flex;
  flex-direction: column;
  margin-top: 2px;
  border-right: 1px solid #d0d0d0;
  color: #444;
}

.outline-head {
  display: flex;
  align-items: center;
  gap: 28px;
  height: 48px;
  padding: 0 17px 0 14px;
}

.outline-head h2 {
  flex: 1;
  color: #222;
  font-size: 15px;
}

.outline-search {
  display: flex;
  align-items: center;
  gap: 4px;
  height: 26px;
  margin: 5px 18px 0 14px;
  padding: 0 3px 0 6px;
  border: 1px solid #ababab;
  background: #fff;
}

.outline-search input {
  flex: 1;
  border: none;
  padding: 0;
}

.outline-tabs {
  display: flex;
  gap: 23px;
  padding: 19px 14px 7px;
}

.outline-tabs button {
  width: 26px;
  height: 28px;
  padding-bottom: 5px;
  border-bottom: 2px solid transparent;
}

.outline-tabs .active {
  border-color: #185abd;
  color: #2b579a;
  font-weight: bold;
}

.outline-scroll {
  flex: 1;
  min-height: 0;
  overflow: hidden;
}

.tree {
  display: flex;
  flex-direction: column;
  gap: 1px;
  margin-top: -5px;
  list-style: none;
}

.tree li {
  position: relative;
  display: flex;
  height: 20px;
  margin: 0 31px 0 19px;
  line-height: 20px;
}

.tree .l1 { padding-left: 16px; }
.tree .l1 span { width: 28px; }

.tree .l2 {
  margin-left: 35px;
  padding-left: 17px;
}

.tree .l2 span { width: 39px; }

.tree .l3 {
  margin-left: 35px;
  padding-left: 32px;
}

.tree .l3 span { width: 14px; }

.tree .open::before {
  content: "";
  position: absolute;
  left: 0;
  top: 7px;
  border-left: 6px solid transparent;
  border-bottom: 6px solid #444;
}

.tree .current {
  margin-left: 46px;
  padding-left: 6px;
  background: #c2d5f2;
}

/* document */
.canvas {
  flex: 1;
  position: relative;
  display: flex;
  justify-content: center;
  overflow: hidden;
}

.page {
  width: 1033px;
  flex: none;
  padding: 12px 97px 0 147px;
  border: solid #c6c6c6;
  border-width: 0 1px;
  background: #fff;
  color: #000;
  font-family: "Liberation Serif", "Noto Sans CJK SC", serif;
  font-size: 16px;
}

.lead {
  display: flex;
  align-items: center;
  margin-bottom: 18px;
  font-size: 24px;
  line-height: 30px;
}

.figure {
  display: flex;
  align-items: flex-end;
}

.diagram {
  position: relative;
  flex: none;
  width: 793px;
  height: 625px;
}

.wires {
  width: 100%;
  height: 100%;
  fill: none;
  stroke: #000;
  stroke-width: 2;
}

.node {
  position: absolute;
  display: flex;
  align-items: center;
  justify-content: center;
  height: 36px;
  padding: 6px 0 0 8px;
  border: 2px solid #000;
  background: #fff;
  line-height: 16px;
  white-space: nowrap;
}

.node svg {
  width: 10px;
  height: 10px;
}

.node.tall {
  flex-direction: column;
  width: 55px;
  height: 150px;
  padding: 6px 6px 0 0;
}

.tall span {
  writing-mode: vertical-rl;
}

.tall svg {
  transform: rotate(90deg);
}

.picked {
  background: linear-gradient(to right, #6f9bf0 4px, transparent 4px);
}

.browse { left: 172px; top: 19px; }
.chat { left: 246px; top: 18px; }
.upload { left: 322px; top: 18px; }
.apply { left: 395px; top: 18px; }
.guide { left: 464px; top: 19px; }
.revisit { left: 537px; top: 20px; }

.user { left: 344px; top: 196px; width: 105px; }
.platform { left: 317px; top: 276px; width: 158px; }
.doctor { left: 167px; top: 352px; width: 105px; }
.admin { left: 520px; top: 353px; width: 105px; }

.node.platform { height: 45px; }
.node.upload, .node.apply, .node.guide, .node.revisit { height: 148px; }

.diagnose { left: 70px; top: 432px; }
.fetch { left: 134px; top: 432px; }
.prescribe { left: 203px; top: 433px; }
.review { left: 272px; top: 434px; }
.reply { left: 339px; top: 435px; }

.manage-user { left: 417px; top: 435px; }
.manage-doctor { left: 486px; top: 436px; }
.manage-symptom { left: 553px; top: 436px; }
.manage-body { left: 617px; top: 435px; }
.manage-food { left: 684px; top: 435px; }

.node.diagnose { height: 154px; }
.node.fetch, .node.prescribe, .node.manage-user, .node.manage-symptom,
.node.manage-body, .node.manage-food { height: 152px; }

.caption {
  display: flex;
  align-items: center;
  justify-content: center;
  margin: 35px 0 45px;
  padding-left: 10px;
  line-height: 24px;
  font-weight: 500;
}

.page-foot {
  display: flex;
  justify-content: space-between;
  margin: 0 -31px;
}

.corner {
  width: 31px;
  height: 31px;
  border-top: 1px solid #aaa;
}

.corner.left { border-right: 1px solid #aaa; }
.corner.right { border-left: 1px solid #aaa; }

.page-no {
  display: flex;
  align-items: center;
  height: 10px;
  padding-left: 4px;
  color: #777;
}

.check {
  position: absolute;
  right: 10px;
  top: 9px;
  display: flex;
  align-items: center;
  justify-content: center;
  gap: 5px;
  width: 100px;
  height: 36px;
  border: 1px solid #ccc;
  border-radius: 4px;
  background: #fff;
  font-size: 13px;
}

.watermark {
  position: absolute;
  right: 72px;
  bottom: 26px;
  width: 200px;
  color: #b4b4b4;
  font-size: 15px;
  line-height: 22px;
  white-space: nowrap;
}

.wm-title {
  font-size: 20px;
  line-height: 26px;
}

.scrollbar {
  flex: none;
  width: 17px;
  display: flex;
  flex-direction: column;
  align-items: center;
  justify-content: space-between;
  padding: 5px 0;
  background: #f5f5f5;
}

.thumb {
  width: 9px;
  height: 17px;
  margin-bottom: 170px;
  border-radius: 4px;
  background: #666;
}

/* status bar */
.status {
  display: flex;
  align-items: center;
  gap: 20px;
  padding: 1px 8px 0 12px;
  border-top: 1px solid #fff;
  background: #f4f4f4;
  white-space: nowrap;
}

.pages {
  margin-right: 3px;
}

.access {
  display: flex;
  align-items: center;
  gap: 4px;
  font-weight: bold;
}

.views {
  display: flex;
  align-items: center;
  align-self: stretch;
  margin-left: auto;
}

.focus {
  gap: 3px;
  margin-right: 12px;
}

.view {
  width: 40px;
  height: 20px;
  display: flex;
  align-items: center;
  justify-content: center;
}

.view.on {
  background: #dedede;
}

.zoom {
  display: flex;
  align-items: center;
  gap: 5px;
  margin-left: -12px;
}

.zoom input {
  width: 100px;
  height: 12px;
  margin: 0;
  appearance: none;
  background: linear-gradient(#555, #555) center / 100% 1px no-repeat;
}

.zoom input::-webkit-slider-thumb {
  appearance: none;
  width: 5px;
  height: 12px;
  background: #555;
}

.percent {
  width: 38px;
  text-align: right;
}
```
